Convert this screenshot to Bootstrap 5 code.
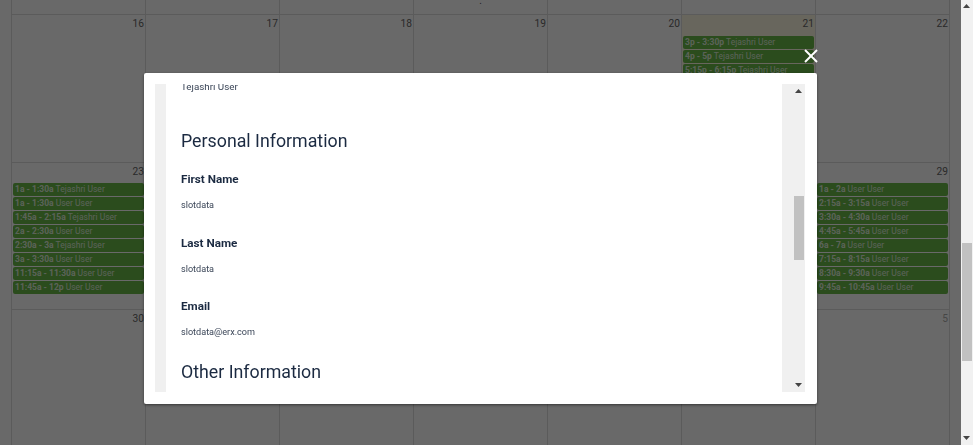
<!DOCTYPE html>
<html lang="en">
<head>
  <meta charset="UTF-8">
  <title>Calendar</title>
  <link href="https://cdn.jsdelivr.net/npm/bootstrap@5.3.0/dist/css/bootstrap.min.css" rel="stylesheet">
  <style>
    html, body { height: 100%; overflow: hidden; }
    body { font-family: Roboto, sans-serif; background: #fff; color: #212529; }

    /* calendar behind the modal */
    .cal-wrap { width: 961px; padding-left: 11px; height: 445px; overflow: hidden; }
    .cal-grid { width: 939px; border-left: 1px solid #ddd; }
    .cal-week { border-bottom: 1px solid #ddd; }
    .cal-week .col { border-right: 1px solid #ddd; min-width: 0; }
    .wk-top { height: 15px; }
    .wk-a { height: 148px; }
    .wk-b { height: 147px; }
    .wk-c { height: 140px; border-bottom: 0 !important; }
    .top-mark { font-size: 10px; line-height: 2px; color: #555; }
    .day-today { background: #fcf8e3; }
    .day-num { font-size: 10.2px; line-height: 14px; text-align: right; padding: 2px 1px 0 0; height: 20px; color: #666; }
    .day-off { opacity: .55; }
    .cal-ev { background: #68b848; border-radius: 2px; color: rgba(255,255,255,.8); font-size: 8.5px; line-height: 13px; height: 13px; margin: 0 1px 1px 1px; padding-left: 2px; white-space: nowrap; overflow: hidden; }
    .cal-ev b { font-weight: 700; }
    .ev-today { margin-top: 1px; }

    /* page scrollbar */
    .page-bar { position: fixed; top: 0; right: 0; bottom: 0; width: 12px; background: #f1f1f1; }
    .page-thumb { position: absolute; top: 243px; left: 1px; width: 10px; height: 118px; background: #c1c1c1; }
    .bar-arrow { display: block; width: 7px; height: 4px; fill: #444; }
    .page-bar .arrow-up { position: absolute; top: 4px; left: 2px; }
    .page-bar .arrow-down { position: absolute; bottom: 5px; left: 2px; }

    /* modal */
    .modal-backdrop.shade { width: calc(100% - 12px); opacity: .59; }
    .modal.slot-modal { width: calc(100% - 12px); overflow: hidden; }
    .slot-modal .modal-dialog { max-width: 673px; margin: 73px auto 0; }
    .slot-modal .modal-content { height: 331px; padding: 11px 12px 12px 11px; border: 0; border-radius: 2px; box-shadow: 0 1px 3px rgba(0,0,0,.5); }
    .close-x { position: absolute; top: -24px; right: -1px; width: 14px; height: 14px; padding: 0; border: 0; background: none; line-height: 0; }
    .close-x svg { width: 14px; height: 14px; stroke: #fff; stroke-width: 2; }
    .side-band { width: 11px; background: #f0f0f0; }
    .scroll-pane { overflow: hidden; padding-left: 15px; min-width: 0; color: #1b2a41; }
    .scroll-inner { margin-top: -4px; }
    .pane-bar { width: 23px; background: #f0f0f0; position: relative; }
    .pane-thumb { position: absolute; top: 112px; left: 12px; width: 10px; height: 64px; background: #c1c1c1; }
    .pane-bar .arrow-up { position: absolute; top: 5px; left: 13px; }
    .pane-bar .arrow-down { position: absolute; bottom: 5px; left: 13px; }
    .who-line { font-size: 9.8px; line-height: 14px; margin-bottom: 37px; color: #3a4557; }
    .info-head { font-size: 17.8px; font-weight: 400; line-height: 20px; margin: 0; }
    .first-head { margin-bottom: 20px; }
    .info-label { font-size: 11.7px; font-weight: 700; line-height: 16px; margin: 0 0 11px; }
    .info-value { font-size: 9.1px; line-height: 14px; color: #3a4557; }
    .info-field { height: 63.7px; }
  </style>
</head>
<body>

  <div class="cal-wrap">
    <div class="cal-grid">
      <div class="row g-0 cal-week wk-top">
        <div class="col"></div><div class="col"></div><div class="col"></div>
        <div class="col text-center top-mark">.</div>
        <div class="col"></div><div class="col"></div><div class="col"></div>
      </div>
      <div class="row g-0 cal-week wk-a">
        <div class="col"><div class="day-num">16</div></div>
        <div class="col"><div class="day-num">17</div></div>
        <div class="col"><div class="day-num">18</div></div>
        <div class="col"><div class="day-num">19</div></div>
        <div class="col"><div class="day-num">20</div></div>
        <div class="col day-today">
          <div class="day-num">21</div>
          <div class="cal-ev ev-today"><b>3p - 3:30p</b> Tejashri User</div>
          <div class="cal-ev"><b>4p - 5p</b> Tejashri User</div>
          <div class="cal-ev"><b>5:15p - 6:15p</b> Tejashri User</div>
        </div>
        <div class="col"><div class="day-num">22</div></div>
      </div>
      <div class="row g-0 cal-week wk-b">
        <div class="col">
          <div class="day-num">23</div>
          <div class="cal-ev"><b>1a - 1:30a</b> Tejashri User</div>
          <div class="cal-ev"><b>1a - 1:30a</b> User User</div>
          <div class="cal-ev"><b>1:45a - 2:15a</b> Tejashri User</div>
          <div class="cal-ev"><b>2a - 2:30a</b> User User</div>
          <div class="cal-ev"><b>2:30a - 3a</b> Tejashri User</div>
          <div class="cal-ev"><b>3a - 3:30a</b> User User</div>
          <div class="cal-ev"><b>11:15a - 11:30a</b> User User</div>
          <div class="cal-ev"><b>11:45a - 12p</b> User User</div>
        </div>
        <div class="col"><div class="day-num">24</div></div>
        <div class="col"><div class="day-num">25</div></div>
        <div class="col"><div class="day-num">26</div></div>
        <div class="col"><div class="day-num">27</div></div>
        <div class="col"><div class="day-num">28</div></div>
        <div class="col">
          <div class="day-num">29</div>
          <div class="cal-ev"><b>1a - 2a</b> User User</div>
          <div class="cal-ev"><b>2:15a - 3:15a</b> User User</div>
          <div class="cal-ev"><b>3:30a - 4:30a</b> User User</div>
          <div class="cal-ev"><b>4:45a - 5:45a</b> User User</div>
          <div class="cal-ev"><b>6a - 7a</b> User User</div>
          <div class="cal-ev"><b>7:15a - 8:15a</b> User User</div>
          <div class="cal-ev"><b>8:30a - 9:30a</b> User User</div>
          <div class="cal-ev"><b>9:45a - 10:45a</b> User User</div>
        </div>
      </div>
      <div class="row g-0 cal-week wk-c">
        <div class="col"><div class="day-num">30</div></div>
        <div class="col"><div class="day-num day-off">31</div></div>
        <div class="col"><div class="day-num day-off">1</div></div>
        <div class="col"><div class="day-num day-off">2</div></div>
        <div class="col"><div class="day-num day-off">3</div></div>
        <div class="col"><div class="day-num day-off">4</div></div>
        <div class="col"><div class="day-num day-off">5</div></div>
      </div>
    </div>
  </div>

  <div class="page-bar">
    <svg class="bar-arrow arrow-up" viewBox="0 0 7 4"><polygon points="3.5,0 7,4 0,4"/></svg>
    <div class="page-thumb"></div>
    <svg class="bar-arrow arrow-down" viewBox="0 0 7 4"><polygon points="0,0 7,0 3.5,4"/></svg>
  </div>

  <div class="modal-backdrop shade"></div>

  <div class="modal d-block slot-modal" tabindex="-1">
    <div class="modal-dialog">
      <div class="modal-content">
        <button type="button" class="close-x" aria-label="Close">
          <svg viewBox="0 0 14 14"><line x1="1" y1="1" x2="13" y2="13"/><line x1="13" y1="1" x2="1" y2="13"/></svg>
        </button>
        <div class="d-flex h-100">
          <div class="side-band flex-shrink-0"></div>
          <div class="scroll-pane flex-grow-1">
            <div class="scroll-inner">
              <div class="who-line">Tejashri User</div>
              <h4 class="info-head first-head">Personal Information</h4>
              <div class="info-field">
                <h6 class="info-label">First Name</h6>
                <div class="info-value">slotdata</div>
              </div>
              <div class="info-field">
                <h6 class="info-label">Last Name</h6>
                <div class="info-value">slotdata</div>
              </div>
              <div class="info-field">
                <h6 class="info-label">Email</h6>
                <div class="info-value">slotdata@erx.com</div>
              </div>
              <h4 class="info-head">Other Information</h4>
            </div>
          </div>
          <div class="pane-bar flex-shrink-0">
            <svg class="bar-arrow arrow-up" viewBox="0 0 7 4"><polygon points="3.5,0 7,4 0,4"/></svg>
            <div class="pane-thumb"></div>
            <svg class="bar-arrow arrow-down" viewBox="0 0 7 4"><polygon points="0,0 7,0 3.5,4"/></svg>
          </div>
        </div>
      </div>
    </div>
  </div>

  <script src="https://cdn.jsdelivr.net/npm/bootstrap@5.3.0/dist/js/bootstrap.bundle.min.js"></script>
</body>
</html>
